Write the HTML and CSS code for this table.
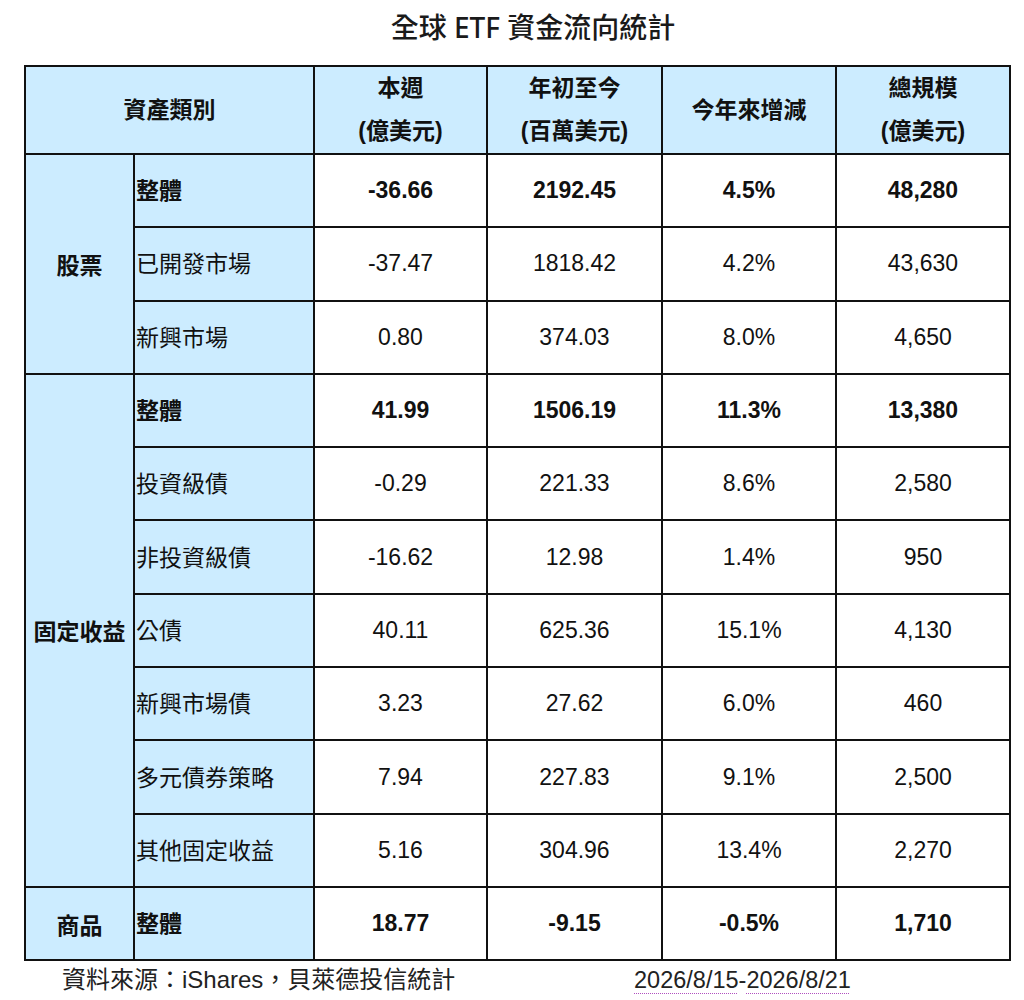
FILE: index.html
```html
<!DOCTYPE html>
<html lang="zh-Hant">
<head>
<meta charset="utf-8">
<title>全球 ETF 資金流向統計</title>
<link rel="stylesheet" href="styles.css">
</head>
<body>
<div class="page">
  <h1 class="title">全球 ETF 資金流向統計</h1>
  <table class="flow">
    <colgroup>
      <col class="c1"><col class="c2"><col class="c3"><col class="c4"><col class="c5"><col class="c6">
    </colgroup>
    <thead>
      <tr class="head">
        <th colspan="2">資產類別</th>
        <th>本週<br>(億美元)</th>
        <th>年初至今<br>(百萬美元)</th>
        <th>今年來增減</th>
        <th>總規模<br>(億美元)</th>
      </tr>
    </thead>
    <tbody>
      <tr class="total">
        <td class="cat" rowspan="3">股票</td>
        <td class="sub">整體</td><td>-36.66</td><td>2192.45</td><td>4.5%</td><td>48,280</td>
      </tr>
      <tr><td class="sub">已開發市場</td><td>-37.47</td><td>1818.42</td><td>4.2%</td><td>43,630</td></tr>
      <tr><td class="sub">新興市場</td><td>0.80</td><td>374.03</td><td>8.0%</td><td>4,650</td></tr>
      <tr class="total">
        <td class="cat" rowspan="7">固定收益</td>
        <td class="sub">整體</td><td>41.99</td><td>1506.19</td><td>11.3%</td><td>13,380</td>
      </tr>
      <tr><td class="sub">投資級債</td><td>-0.29</td><td>221.33</td><td>8.6%</td><td>2,580</td></tr>
      <tr><td class="sub">非投資級債</td><td>-16.62</td><td>12.98</td><td>1.4%</td><td>950</td></tr>
      <tr><td class="sub">公債</td><td>40.11</td><td>625.36</td><td>15.1%</td><td>4,130</td></tr>
      <tr><td class="sub">新興市場債</td><td>3.23</td><td>27.62</td><td>6.0%</td><td>460</td></tr>
      <tr><td class="sub">多元債券策略</td><td>7.94</td><td>227.83</td><td>9.1%</td><td>2,500</td></tr>
      <tr><td class="sub">其他固定收益</td><td>5.16</td><td>304.96</td><td>13.4%</td><td>2,270</td></tr>
      <tr class="total">
        <td class="cat">商品</td>
        <td class="sub">整體</td><td>18.77</td><td>-9.15</td><td>-0.5%</td><td>1,710</td>
      </tr>
    </tbody>
  </table>
  <div class="footer">
    <span class="source">資料來源：iShares，貝萊德投信統計</span>
    <span class="period"><span class="date">2026/8/15</span>-<span class="date">2026/8/21</span></span>
  </div>
</div>
</body>
</html>
```

FILE: styles.css
```css
html, body {
  margin: 0;
  padding: 0;
  background: #ffffff;
}

body {
  font-family: "Liberation Sans", "Noto Sans CJK TC", Arial, sans-serif;
  color: #111111;
}

.page {
  width: 1024px;
}

.title {
  margin: 0;
  height: 65px;
  box-sizing: border-box;
  padding: 9px 0 0 42px;
  text-align: center;
  font-family: "Noto Sans", "Noto Sans CJK TC", sans-serif;
  font-size: 28px;
  font-weight: 500;
  line-height: 36px;
  color: #1a1a1a;
}

.flow {
  margin-left: 24px;
  border-collapse: collapse;
  table-layout: fixed;
  width: 985px;
  font-size: 23px;
}

.c1 { width: 109px; }
.c2 { width: 180px; }
.c3 { width: 173px; }
.c4 { width: 175px; }
.c5 { width: 174px; }
.c6 { width: 174px; }

.flow th,
.flow td {
  border: 2px solid #111111;
  padding: 0;
  text-align: center;
  vertical-align: middle;
}

.flow th {
  background: #ccecff;
  font-weight: 700;
  line-height: 43px;
}

.head {
  height: 88px;
}

.flow tbody tr {
  height: 73.3px;
}

.flow td.cat {
  background: #ccecff;
  font-weight: 700;
}

.flow td.sub {
  background: #ccecff;
  text-align: left;
  padding-left: 1px;
  padding-bottom: 3px;
}

.total td {
  font-weight: 700;
}

.footer {
  display: grid;
  grid-template-columns: 572px auto;
  padding-left: 62px;
  margin-top: 4px;
  font-size: 24px;
  line-height: 30px;
  color: #222222;
}

.period {
  font-size: 23.5px;
}

.date {
  text-decoration: underline dotted #b04fc0;
  text-underline-offset: 5px;
  text-decoration-thickness: 1px;
}
```
